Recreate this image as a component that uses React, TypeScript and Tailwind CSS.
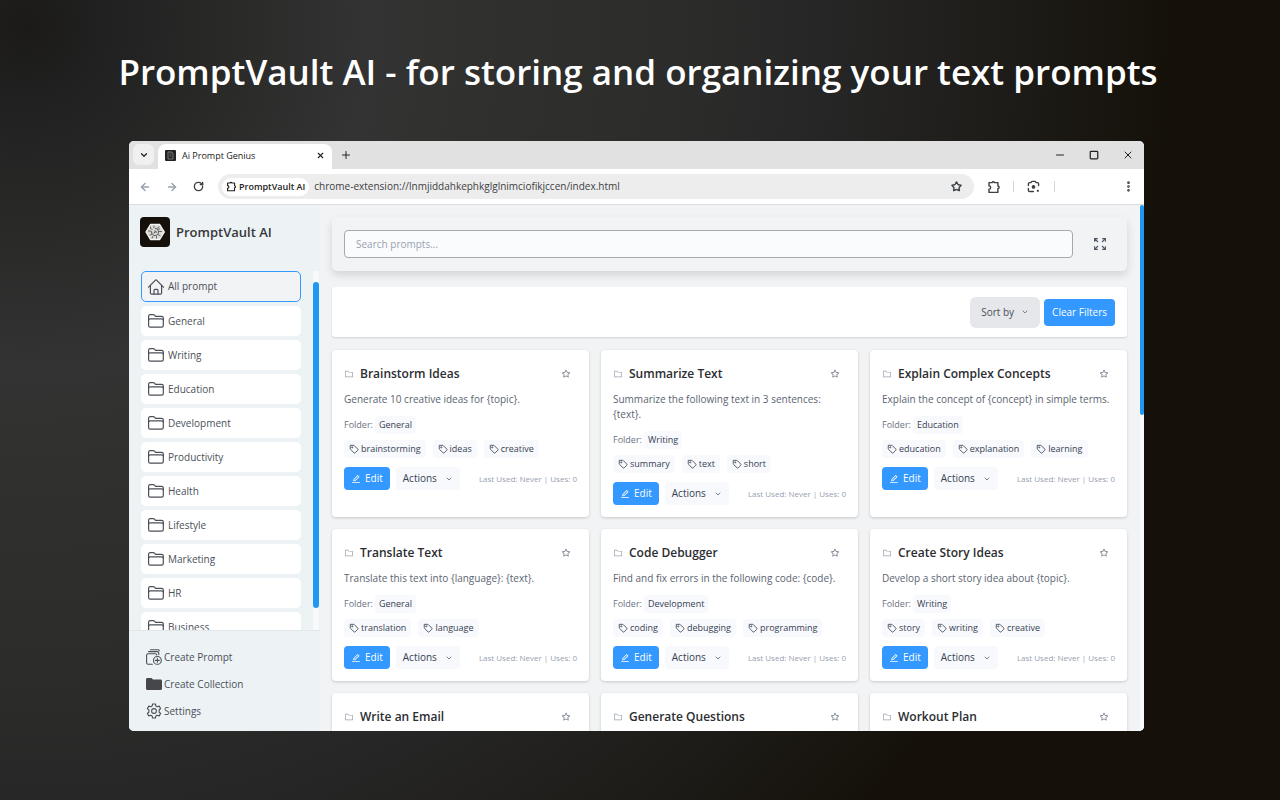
import React from 'react';
import { AiOutlineEdit, AiOutlineFolder, AiOutlineStar } from 'react-icons/ai';
import { ArrowLeft, ArrowRight, ChevronDown, Minus, MoreVertical, Plus, RotateCw, Square, Star, X } from 'lucide-react';

type Prompt = {
  title: string;
  text?: string;
  folder?: string;
  tags?: string[];
};

const folders = [
  'General',
  'Writing',
  'Education',
  'Development',
  'Productivity',
  'Health',
  'Lifestyle',
  'Marketing',
  'HR',
  'Business',
];

const prompts: Prompt[] = [
  {
    title: 'Brainstorm Ideas',
    text: 'Generate 10 creative ideas for {topic}.',
    folder: 'General',
    tags: ['brainstorming', 'ideas', 'creative'],
  },
  {
    title: 'Summarize Text',
    text: 'Summarize the following text in 3 sentences: {text}.',
    folder: 'Writing',
    tags: ['summary', 'text', 'short'],
  },
  {
    title: 'Explain Complex Concepts',
    text: 'Explain the concept of {concept} in simple terms.',
    folder: 'Education',
    tags: ['education', 'explanation', 'learning'],
  },
  {
    title: 'Translate Text',
    text: 'Translate this text into {language}: {text}.',
    folder: 'General',
    tags: ['translation', 'language'],
  },
  {
    title: 'Code Debugger',
    text: 'Find and fix errors in the following code: {code}.',
    folder: 'Development',
    tags: ['coding', 'debugging', 'programming'],
  },
  {
    title: 'Create Story Ideas',
    text: 'Develop a short story idea about {topic}.',
    folder: 'Writing',
    tags: ['story', 'writing', 'creative'],
  },
  { title: 'Write an Email' },
  { title: 'Generate Questions' },
  { title: 'Workout Plan' },
];

function FolderIcon() {
  return (
    <svg viewBox="0 0 16 14" className="w-4 h-[14px] shrink-0" fill="none" stroke="currentColor" strokeWidth="1.2" strokeLinejoin="round">
      <path d="M.6 11.6V2.2C.6 1.3 1.2.7 2.1.7h3.2c.5 0 .9.2 1.2.5l1 1.2h6.2c.9 0 1.6.7 1.6 1.5v7.7c0 .9-.7 1.6-1.6 1.6H2.1c-.9 0-1.5-.7-1.5-1.6Z" />
      <path d="M.6 6.3c0-.9.7-1.5 1.5-1.5h11.6c.9 0 1.6.6 1.6 1.5" />
    </svg>
  );
}

function HomeIcon() {
  return (
    <svg viewBox="0 0 16 16" className="w-4 h-4 shrink-0" fill="none" stroke="currentColor" strokeWidth="1.2" strokeLinejoin="round" strokeLinecap="round">
      <path d="M.6 8.2 7.2 1.3a1.1 1.1 0 0 1 1.6 0l6.6 6.9" />
      <path d="M2.4 6.5v7.4c0 .7.5 1.2 1.2 1.2h8.8c.7 0 1.2-.5 1.2-1.2V6.5" />
      <path d="M6 15v-3.6c0-.6.4-1 1-1h2c.6 0 1 .4 1 1V15" />
    </svg>
  );
}

function TagIcon() {
  return (
    <svg viewBox="0 0 24 24" className="w-[10px] h-[10px] shrink-0" fill="none" stroke="currentColor" strokeWidth="2" strokeLinejoin="round">
      <path d="M3 3.2h8.3c.5 0 1 .2 1.4.6l8.4 8.4c.8.8.8 2 0 2.8l-6.2 6.2c-.8.8-2 .8-2.8 0L3.6 12.8c-.4-.4-.6-.9-.6-1.4Z" />
      <circle cx="7.8" cy="8" r="1.4" />
    </svg>
  );
}

function PuzzleIcon({ className }: { className: string }) {
  return (
    <svg viewBox="0 0 14 14" className={className} fill="none" stroke="currentColor" strokeWidth="1.4" strokeLinejoin="round">
      <path d="M2 2.6h3.1a1.2 1.2 0 0 1 2.3 0h3.5V6a1.2 1.2 0 0 1 0 2.5v3.9H2V9.3a1.7 1.7 0 0 0 0-3.4Z" />
    </svg>
  );
}

function LensIcon() {
  return (
    <svg viewBox="0 0 14 14" className="w-[13px] h-[13px]" fill="none" stroke="currentColor" strokeWidth="1.5" strokeLinecap="round">
      <path d="M1.5 6V4.2c0-.8.6-1.4 1.4-1.4h1.3L5.2 1.5h3.6l1 1.3h1.3c.8 0 1.4.6 1.4 1.4V6M1.5 9v2c0 .8.6 1.4 1.4 1.4h4" />
      <circle cx="7" cy="7.5" r="2" fill="currentColor" stroke="none" />
      <circle cx="11.7" cy="11.7" r="1.2" fill="currentColor" stroke="none" />
    </svg>
  );
}

function LogoIcon() {
  return (
    <svg viewBox="0 0 30 30" className="w-[30px] h-[30px]" fill="none">
      <rect width="30" height="30" rx="4" fill="#15110a" />
      <path d="M10.5 7.5h9.2l4.6 7.5-4.6 7.5h-9.200L6 15Z" fill="#d9d9d8" stroke="#f4f4f4" strokeWidth="1.4" strokeLinejoin="round" />
      <path
        d="M10.5 9.5v2l2 1M14 8.5v2.500M19.5 9.5l-2.500 2M8 14h3l1 1.500M22 14.5h-3M9.5 18l2.500-.5M12 21.5l1-2.500M16.5 21.5v-2.500M20.5 19l-2.500-1.500M20 12h-2"
        stroke="#3b3831"
        strokeWidth=".7"
      />
      <path d="M15 11.5c2.500 0 3.500 1.500 3.500 3.500s-1.500 3.500-3.500 3.500-3.500-1.500-3.500-3.500" stroke="#3b3831" strokeWidth=".8" />
      <path d="M15 13.5v1.500h2M15 15l-1.500 1.500" stroke="#3b3831" strokeWidth=".8" />
    </svg>
  );
}

function ExpandIcon() {
  return (
    <svg viewBox="0 0 12 12" className="w-3 h-3" fill="none" stroke="currentColor" strokeWidth="1.1">
      <path d="M.6 3.8V.6h3.2M.8.8 4 4M8.2.6h3.2v3.2M11.2.8 8 4M.6 8.2v3.2h3.2M.8 11.2 4 8M8.2 11.4h3.2V8.2M11.2 11.2 8 8" />
    </svg>
  );
}

function CreatePromptIcon() {
  return (
    <svg viewBox="0 0 16 16" className="w-4 h-4" fill="none" stroke="currentColor" strokeWidth="1.1" strokeLinecap="round">
      <path d="M4.5.7H12c.7 0 1.2.4 1.3 1M2.5 2.6h8.8c.9 0 1.5.6 1.5 1.5v1.5" />
      <path d="M6.3 15.3H2.1c-.9 0-1.5-.6-1.5-1.5V6.2c0-.9.6-1.5 1.5-1.5h7.2c.9 0 1.5.5 1.5 1.3" />
      <circle cx="11.4" cy="11.4" r="3.9" />
      <path d="M11.4 9.5v3.8M9.5 11.4h3.8" />
    </svg>
  );
}

function GearIcon() {
  return (
    <svg viewBox="0 0 16 16" className="w-4 h-4" fill="none" stroke="currentColor" strokeWidth="1.1" strokeLinejoin="round">
      <path d="M6.6 1h2.800l.5 2 1.300.7 2-.6 1.400 2.400-1.500 1.500v2l1.500 1.500-1.400 2.400-2-.6-1.300.7-.5 2H6.600l-.5-2-1.300-.7-2 .6-1.400-2.400L2.900 9V7L1.400 5.500l1.400-2.400 2 .6L6.100 3Z" />
      <circle cx="8" cy="8" r="2.4" />
    </svg>
  );
}

function PromptCard({ prompt }: { prompt: Prompt }) {
  return (
    <article className="bg-white rounded p-3 shadow-[0_1px_3px_rgba(0,0,0,0.18)]">
      <div className="flex items-center gap-[6px] h-6">
        <AiOutlineFolder className="w-[10px] h-[10px] text-gray-400" />
        <h2 className="flex-1 text-[12px] font-semibold text-[#2b2d31] whitespace-nowrap">{prompt.title}</h2>
        <button aria-label="Favorite" className="mr-[6px] text-gray-500">
          <AiOutlineStar className="w-[10px] h-[10px]" />
        </button>
      </div>
      {prompt.text && <p className="mt-[6px] text-[10px] leading-[15px] text-[#5b6471]">{prompt.text}</p>}
      {prompt.folder && (
        <div className="mt-[9px] flex items-center gap-[2px] leading-[18px] text-[9px]">
          <span className="text-gray-500">Folder:</span>
          <span className="rounded px-1 bg-[#f8f9fc] text-gray-700">{prompt.folder}</span>
        </div>
      )}
      {prompt.tags && (
        <>
          <div className="mt-[6px] flex gap-[7px]">
            {prompt.tags.map((tag) => (
              <span key={tag} className="flex items-center gap-[2px] h-[18px] rounded px-[5px] bg-[#f8f9fc] text-[9px] text-gray-700">
                <TagIcon />
                {tag}
              </span>
            ))}
          </div>
          <div className="mt-[9px] flex items-center">
            <button className="flex items-center gap-1 h-[23px] px-[7px] rounded bg-[#3398ff] text-white text-[10px]">
              <AiOutlineEdit className="w-[10px] h-[10px]" />
              Edit
            </button>
            <button className="flex items-center gap-2 h-[23px] ml-[6px] px-[7px] rounded bg-[#f8f9fc] text-gray-700 text-[10px]">
              Actions
              <ChevronDown className="w-2 h-2" />
            </button>
            <span className="ml-auto text-[8px] text-gray-400 whitespace-nowrap">Last Used: Never | Uses: 0</span>
          </div>
        </>
      )}
    </article>
  );
}

export default function App() {
  return (
    <div className="h-screen min-h-[600px] flex flex-col px-[10%] overflow-hidden bg-[radial-gradient(circle_at_25px_25px,#1b1a18_0px,#212121_80px,#292928_200px,#333333_345px,#30302e_450px,#2c2c2b_650px,#262626_800px,#1d1b17_1000px,#15110a_1145px)] font-['Open_Sans',sans-serif]">
      <h1 className="h-[141px] shrink-0 pt-[3px] pr-1 flex items-center justify-center text-white text-[35px] font-semibold whitespace-nowrap">
        PromptVault AI - for storing and organizing your text prompts
      </h1>

      <div className="flex-1 min-h-0 mb-[69px] ml-px mr-2 flex flex-col rounded-[5px] overflow-hidden bg-white">
        {/* Tab strip */}
        <div className="h-7 shrink-0 flex items-end bg-[#e1e1e1] text-[#222]">
          <button aria-label="Search tabs" className="w-[21px] h-[21px] ml-1 mb-1 flex items-center justify-center rounded-md bg-[#f0f0f1]">
            <ChevronDown className="w-[10px] h-[10px]" strokeWidth={3} />
          </button>
          <div className="w-[174px] h-[25px] ml-1 px-[7px] pb-[2px] flex items-center rounded-t-lg bg-white">
            <svg viewBox="0 0 11 11" className="w-[11px] h-[11px]">
              <rect width="11" height="11" rx="1" fill="#222" />
              <path d="M3 2h4l1 2v5H3ZM4.5 4h2M4.5 6h2" stroke="#999" fill="none" strokeWidth=".7" />
            </svg>
            <span className="ml-[6px] text-[9px] flex-1">Ai Prompt Genius</span>
            <button aria-label="Close tab">
              <X className="w-[9px] h-[9px]" strokeWidth={3} />
            </button>
          </div>
          <button aria-label="New tab" className="ml-2 mb-2">
            <Plus className="w-3 h-3" />
          </button>
          <div className="ml-auto mr-[10px] h-7 flex items-center gap-[23px]">
            <button aria-label="Minimize"><Minus className="w-3 h-3" /></button>
            <button aria-label="Maximize"><Square className="w-[10px] h-[10px]" strokeWidth={3} /></button>
            <button aria-label="Close"><X className="w-3 h-3" strokeWidth={2} /></button>
          </div>
        </div>

        {/* Address bar */}
        <div className="h-9 shrink-0 flex items-center border-b border-[#dcdde0] text-[#3c4043]">
          <div className="flex items-center gap-[15px] ml-[10px]">
            <ArrowLeft className="w-3 h-3 text-gray-400" strokeWidth={3} />
            <ArrowRight className="w-3 h-3 text-gray-400" strokeWidth={3} />
            <RotateCw className="w-[11px] h-[11px]" strokeWidth={3} />
          </div>
          <div className="flex-1 h-[25px] ml-[14px] pl-1 pr-3 flex items-center rounded-full bg-[#ededed]">
            <span className="flex items-center gap-[2px] h-[18px] px-1 rounded-full bg-white text-[9px] font-semibold text-[#222] whitespace-nowrap">
              <PuzzleIcon className="w-[11px] h-[11px]" />
              PromptVault AI
            </span>
            <span className="ml-[5px] flex-1 text-[10px] whitespace-nowrap">chrome-extension://lnmjiddahkephkglglnimciofikjccen/index.html</span>
            <Star className="w-[11px] h-[11px]" strokeWidth={3} />
          </div>
          <div className="flex items-center ml-[13px] mr-[9px]">
            <PuzzleIcon className="w-[14px] h-[14px]" />
            <span className="w-px h-[11px] ml-3 bg-gray-300" />
            <span className="ml-[13px]"><LensIcon /></span>
            <span className="w-px h-[11px] ml-[14px] bg-gray-300" />
            <MoreVertical className="w-[13px] h-[13px] ml-[67px]" strokeWidth={3} />
          </div>
        </div>

        <div className="flex-1 min-h-0 flex bg-[#f2f3f5]">
          <aside className="w-[191px] shrink-0 flex flex-col bg-[#edf2f5] text-[#4b5058] text-[10px]">
            <div className="h-[66px] shrink-0 flex items-start gap-[6px] pt-3 pl-[11px]">
              <LogoIcon />
              <span className="leading-[30px] text-[13px] font-semibold text-[#35373b]">PromptVault AI</span>
            </div>
            <div className="flex-1 min-h-0 flex border-b border-[#e3e6e9]">
              <nav className="flex-1 min-h-0 overflow-hidden flex flex-col gap-1 px-3">
                <a href="#all" className="h-[31px] shrink-0 flex items-center gap-1 px-[6px] rounded-[5px] border border-[#3398ff] bg-[#f2f3f5]">
                  <HomeIcon />
                  All prompt
                </a>
                {folders.map((name) => (
                  <a key={name} href={'#' + name} className="h-[30px] shrink-0 flex items-center gap-1 px-[7px] rounded-[5px] bg-white">
                    <FolderIcon />
                    {name}
                  </a>
                ))}
              </nav>
              <div className="w-[6px] mr-px pt-[11px] pb-[22px] bg-[#f8f9fb]">
                <div className="h-full rounded-[3px] bg-[#2196f3]" />
              </div>
            </div>
            <div className="h-[100px] shrink-0 flex flex-col items-start gap-[11px] pt-[18px] pl-[17px] leading-4">
              <button className="flex items-center gap-[2px]"><CreatePromptIcon />Create Prompt</button>
              <button className="flex items-center gap-[2px]">
                <svg viewBox="0 0 16 12" className="w-4 h-3" fill="#45474b">
                  <path d="M1.5 0h4L7 1.6h7.5c.9 0 1.5.6 1.5 1.5v7.4c0 .9-.6 1.5-1.5 1.5h-13C.6 12 0 11.4 0 10.5v-9C0 .6.6 0 1.5 0Z" />
                </svg>
                Create Collection
              </button>
              <button className="flex items-center gap-[2px]"><GearIcon />Settings</button>
            </div>
          </aside>

          <main className="flex-1 min-w-0 overflow-hidden pl-3 pr-[13px] pt-3">
            <div className="h-[54px] mb-4 flex items-center pl-3 pr-[21px] rounded-[5px] bg-[#f2f3f5] shadow-[0_4px_8px_rgba(0,0,0,0.13)]">
              <input
                type="text"
                aria-label="Search prompts"
                placeholder="Search prompts..."
                className="flex-1 min-w-0 h-7 px-[11px] rounded border border-[#a5a8ad] bg-[#fafbfd] text-[10px] placeholder:text-gray-400"
              />
              <button aria-label="Expand" className="ml-[21px] text-gray-600"><ExpandIcon /></button>
            </div>

            <div className="h-[50px] mb-[13px] px-3 flex items-center justify-end gap-1 rounded-[3px] bg-white shadow-[0_1px_2px_rgba(0,0,0,0.14)]">
              <button className="h-[31px] px-[11px] flex items-center gap-[7px] rounded-[6px] bg-[#e5e7eb] text-[#4b5058] text-[10px]">
                Sort by
                <ChevronDown className="w-2 h-2" />
              </button>
              <button className="h-[27px] px-2 rounded bg-[#3398ff] text-white text-[10px]">Clear Filters</button>
            </div>

            <div className="grid grid-cols-3 gap-3">
              {prompts.map((prompt) => (
                <PromptCard key={prompt.title} prompt={prompt} />
              ))}
            </div>
          </main>
          <div className="w-1 shrink-0 bg-[#f8f9fb]">
            <div className="h-[40%] rounded-[2px] bg-[#2196f3]" />
          </div>
        </div>
      </div>
    </div>
  );
}
